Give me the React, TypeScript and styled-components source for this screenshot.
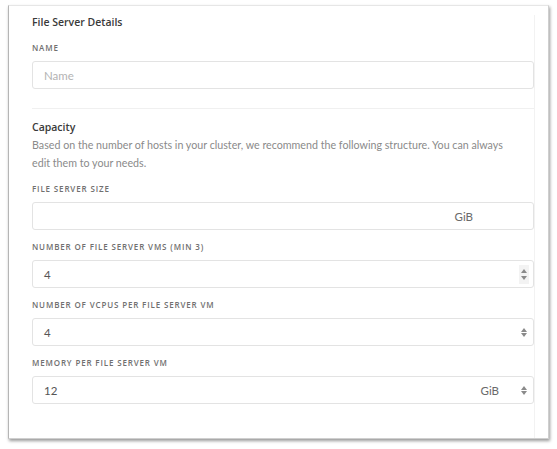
import React from "react";
import styled, { createGlobalStyle } from "styled-components";

const Global = createGlobalStyle`
  html, body { margin: 0; padding: 0; background: #ffffff; }
  body { font-family: Lato, "Open Sans", Arial, sans-serif; }
  * { box-sizing: border-box; }
`;

const Page = styled.div`
  padding: 5px 9px 0 8px;
  width: 557px;
  height: 449px;
`;

const Card = styled.div`
  width: 541px;
  height: 434px;
  background: #fff;
  border: 1px solid #cfcfcf;
  border-left-color: #b5b5b5;
  border-top-color: #e6e6e6;
  box-shadow: 1px 2px 3px rgba(0, 0, 0, 0.4);
  padding: 9px 13px 0 23px;
  display: flex;
`;

const Content = styled.div`
  flex: 1;
  display: flex;
  flex-direction: column;
  border-right: 1px solid #f2f2f2;
  height: 423px;
`;

const Inner = styled.div`
  width: 502px;
`;

const Heading = styled.div`
  font-family: "Open Sans", Lato, sans-serif;
  font-size: 10.5px;
  line-height: 14px;
  font-weight: 600;
  color: #3a3a3a;
`;

const Description = styled.p`
  margin: 2px 0 12px;
  max-width: 480px;
  font-size: 10.7px;
  line-height: 18px;
  color: #8a8a8a;
`;

const Field = styled.div<{ $mb?: number; $mt?: number }>`
  display: flex;
  flex-direction: column;
  margin-top: ${(p) => p.$mt ?? 0}px;
  margin-bottom: ${(p) => p.$mb ?? 12}px;
`;

const Label = styled.label`
  font-family: "Open Sans", Lato, sans-serif;
  font-size: 8px;
  line-height: 10px;
  font-weight: 600;
  letter-spacing: 0.85px;
  color: #707070;
  text-transform: uppercase;
  margin-bottom: 8px;
`;

const InputBox = styled.div`
  height: 28px;
  border: 1px solid #e3e3e3;
  border-radius: 3px;
  display: flex;
  align-items: center;
  padding: 0 0 0 11px;
  font-size: 11.5px;
  color: #555;
`;

const Value = styled.span<{ $placeholder?: boolean }>`
  flex: 1;
  color: ${(p) => (p.$placeholder ? "#b3b3b3" : "#555")};
`;

const Unit = styled.span<{ $mr: number }>`
  color: #6a6a6a;
  margin-right: ${(p) => p.$mr}px;
`;

const SpinBox = styled.div`
  width: 10px;
  height: 19px;
  background: #f3f3f3;
  margin-right: 4px;
  display: flex;
  flex-direction: column;
  align-items: center;
  justify-content: center;
  gap: 3px;
`;

const SelectArrows = styled.div`
  width: 10px;
  margin-right: 4px;
  display: flex;
  flex-direction: column;
  align-items: center;
  gap: 1px;
`;

const Divider = styled.hr`
  border: none;
  border-top: 1px solid #f0f0f0;
  margin: 19px 0 11px;
`;

const Up = () => (
  <svg width="6" height="4" viewBox="0 0 6 4">
    <path d="M3 0 L6 4 L0 4 Z" fill="#8a8a8a" />
  </svg>
);
const Down = () => (
  <svg width="6" height="4" viewBox="0 0 6 4">
    <path d="M0 0 L6 0 L3 4 Z" fill="#8a8a8a" />
  </svg>
);

export default function App() {
  return (
    <>
      <Global />
      <Page>
        <Card>
          <Content>
            <Inner>
              <Heading>File Server Details</Heading>
              <Field $mb={0} $mt={14}>
                <Label>Name</Label>
                <InputBox>
                  <Value $placeholder>Name</Value>
                </InputBox>
              </Field>
              <Divider />
              <Heading>Capacity</Heading>
              <Description>
                Based on the number of hosts in your cluster, we recommend the following structure. You can always
                edit them to your needs.
              </Description>
              <Field>
                <Label>File Server Size</Label>
                <InputBox>
                  <Value />
                  <Unit $mr={60}>GiB</Unit>
                </InputBox>
              </Field>
              <Field>
                <Label>Number of File Server VMs (Min 3)</Label>
                <InputBox>
                  <Value>4</Value>
                  <SpinBox>
                    <Up />
                    <Down />
                  </SpinBox>
                </InputBox>
              </Field>
              <Field>
                <Label>Number of vCPUs per File Server VM</Label>
                <InputBox>
                  <Value>4</Value>
                  <SelectArrows>
                    <Up />
                    <Down />
                  </SelectArrows>
                </InputBox>
              </Field>
              <Field>
                <Label>Memory per File Server VM</Label>
                <InputBox>
                  <Value>12</Value>
                  <Unit $mr={20}>GiB</Unit>
                  <SelectArrows>
                    <Up />
                    <Down />
                  </SelectArrows>
                </InputBox>
              </Field>
            </Inner>
          </Content>
        </Card>
      </Page>
    </>
  );
}
